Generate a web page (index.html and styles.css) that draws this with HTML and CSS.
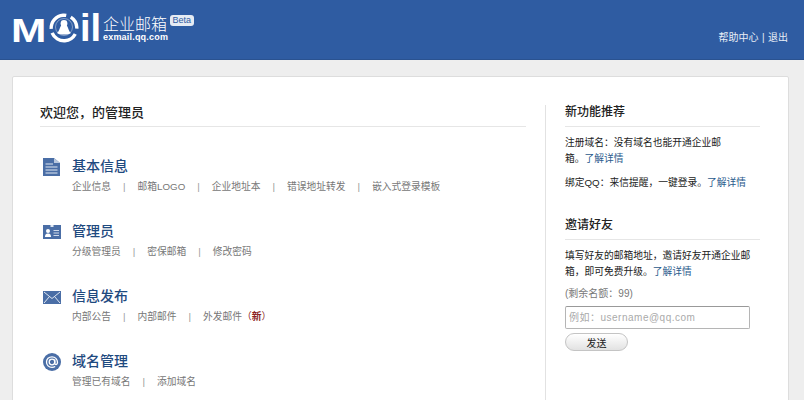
FILE: index.html
```html
<!DOCTYPE html>
<html lang="zh">
<head>
<meta charset="utf-8">
<title>企业邮箱</title>
<link rel="stylesheet" href="styles.css">
</head>
<body>
<header class="top">
  <div class="brand">
    <div class="logo">
      <span class="logo-m">M</span>
      <svg class="logo-o" width="30" height="30" viewBox="0 0 30 30">
        <circle cx="15" cy="15" r="12.800" fill="none" stroke="#fff" stroke-width="3.400" pathLength="100" stroke-dasharray="29 6 17 7 36 5" transform="rotate(176 15 15)"/>
        <circle cx="15" cy="14" r="8.500" fill="none" stroke="#fff" stroke-width="0.800" opacity="0.500"/>
        <circle cx="15" cy="10.500" r="3.400" fill="#fff"/>
        <path d="M15 11C10.500 11 11.500 17.500 8 20C11 22 19 22 22 20C18.500 17.500 19.500 11 15 11Z" fill="#fff"/>
      </svg>
      <span class="logo-il">il</span>
    </div>
    <div class="product">
      <div class="product-name">企业邮箱<span class="beta">Beta</span></div>
      <div class="product-domain">exmail.qq.com</div>
    </div>
  </div>
  <nav class="top-links"><a>帮助中心</a><span class="top-sep">|</span><a>退出</a></nav>
</header>
<main class="card">
  <section class="main-col">
    <h1 class="welcome">欢迎您，的管理员</h1>
    <div class="group">
      <svg class="ico" width="18" height="20" viewBox="0 0 18 20"><path d="M0 1H11L17 6V19H0Z" fill="#4a6ea6"/><path d="M11 1V6H17Z" fill="#b9c8de"/><path d="M2.500 7H10M2.500 10H14.500M2.500 13H14.500M2.500 16H14.500" stroke="#dfe7f2" stroke-width="1.200"/></svg>
      <div class="group-body">
        <h2 class="group-title">基本信息</h2>
        <p class="links"><a>企业信息</a><i>|</i><a>邮箱LOGO</a><i>|</i><a>企业地址本</a><i>|</i><a>错误地址转发</a><i>|</i><a>嵌入式登录模板</a></p>
      </div>
    </div>
    <div class="group">
      <svg class="ico" width="18" height="20" viewBox="0 0 18 20"><rect y="3" width="18" height="14" fill="#4a6ea6"/><rect x="7.500" y="3" width="3" height="2" fill="#dfe7f2"/><circle cx="5" cy="9" r="2" fill="#fff"/><path d="M2 15C2 12 3.500 11.500 5 11.500S8 12 8 15Z" fill="#fff"/><path d="M10.500 8.500H16M10.500 11H16M10.500 13.500H16" stroke="#cfdaea" stroke-width="1"/></svg>
      <div class="group-body">
        <h2 class="group-title">管理员</h2>
        <p class="links"><a>分级管理员</a><i>|</i><a>密保邮箱</a><i>|</i><a>修改密码</a></p>
      </div>
    </div>
    <div class="group">
      <svg class="ico" width="18" height="20" viewBox="0 0 18 20"><rect y="4" width="18" height="13" fill="#4a6ea6"/><path d="M1 5L9 11.500L17 5M1 16L6.500 9.500M17 16L11.500 9.500" fill="none" stroke="#dfe7f2" stroke-width="1"/></svg>
      <div class="group-body">
        <h2 class="group-title">信息发布</h2>
        <p class="links"><a>内部公告</a><i>|</i><a>内部邮件</a><i>|</i><a>外发邮件</a><span class="new">（<b>新</b>）</span></p>
      </div>
    </div>
    <div class="group">
      <svg class="ico" width="18" height="20" viewBox="0 0 18 20"><circle cx="9" cy="10" r="9" fill="#4a6ea6"/><circle cx="9" cy="10" r="2.800" fill="none" stroke="#fff" stroke-width="1.300"/><path d="M11.800 7.500V11.500C11.800 13 14.500 13 14.500 10.500C14.500 7 12 4.800 9 4.800C5.800 4.800 3.500 7 3.500 10C3.500 13.200 5.800 15.300 9 15.300C10.300 15.300 11.300 15 12.200 14.500" fill="none" stroke="#fff" stroke-width="1.300"/></svg>
      <div class="group-body">
        <h2 class="group-title">域名管理</h2>
        <p class="links"><a>管理已有域名</a><i>|</i><a>添加域名</a></p>
      </div>
    </div>
  </section>
  <aside class="side">
    <h3 class="side-title">新功能推荐</h3>
    <p class="side-text">注册域名：没有域名也能开通企业邮<br>箱。<a class="more">了解详情</a></p>
    <p class="side-text gap">绑定QQ：来信提醒，一键登录。<a class="more">了解详情</a></p>
    <h3 class="side-title second">邀请好友</h3>
    <p class="side-text">填写好友的邮箱地址，邀请好友开通企业邮<br>箱，即可免费升级。<a class="more">了解详情</a></p>
    <p class="quota">(剩余名额：99)</p>
    <input class="invite" type="text" placeholder="例如：username@qq.com">
    <button class="send" type="button">发送</button>
  </aside>
</main>
</body>
</html>
```
FILE: styles.css
```css
* { box-sizing: border-box; }
html, body { height: 400px; overflow: hidden; }
body {
  margin: 0;
  background: #eeeeee;
  font-family: "Liberation Sans", "Noto Sans CJK SC", sans-serif;
  font-size: 11px;
  color: #222;
}
h1, h2, h3, p { margin: 0; font-weight: normal; }
.top {
  height: 60px;
  background: #2f5ca2;
  border-bottom: 1px solid #2a5290;
  display: flex;
  justify-content: space-between;
  padding: 0 16px 0 13px;
}
.brand { display: flex; align-items: flex-start; padding-top: 13px; }
.logo { display: flex; align-items: center; height: 30px; color: #fff; font-weight: bold; }
.logo-m, .logo-il { font-family: "Liberation Sans", sans-serif; line-height: 30px; }
.logo-m {
  display: inline-block;
  width: 38px;
  font-size: 34px;
  margin: 3px 0 0 -2px;
  transform: scaleX(1.25);
  transform-origin: left center;
}
.logo-o { flex: none; }
.logo-il { font-size: 38px; margin-left: 1px; width: 22px; }
.product { margin-left: 1px; color: #fff; margin-top: 3px; }
.product-name { font-size: 16px; line-height: 17px; display: flex; align-items: flex-start; font-weight: 300; }
.beta {
  font-size: 9px;
  line-height: 11px;
  background: #e6ebf3;
  color: #2f5ca2;
  border-radius: 3px;
  padding: 0 2.500px;
  margin: -1px 0 0 3px;
}
.product-domain { font-size: 9px; line-height: 10px; font-weight: bold; letter-spacing: 0.200px; margin-top: -1px; }
.top-links { color: #e8eef6; font-size: 10px; padding-top: 32px; line-height: 12px; display: flex; }
.top-sep { margin: 0 3.500px; }
.card {
  margin: 16px 15px 0 12px;
  height: 340px;
  background: #fff;
  border: 1px solid #dddddd;
  border-radius: 2px;
  display: flex;
  padding: 28px 0 0 27px;
}
.main-col { width: 486px; }
.welcome {
  font-size: 13px;
  line-height: 15px;
  color: #222;
  height: 22px;
  border-bottom: 1px solid #e6e6e6;
  font-weight: 500;
}
.group { display: flex; height: 65px; padding-left: 3px; }
.welcome + .group { margin-top: 30px; }
.ico { flex: none; }
.group-body { margin-left: 11px; }
.group-title { font-size: 14px; line-height: 18px; color: #1f4a7f; font-weight: 500; }
.links { font-size: 9.750px; line-height: 24px; color: #777; display: flex; }
.links i { font-style: normal; margin: 0 12px; color: #999; }
.new { color: #8c1f1f; margin-left: 0; }
.side {
  margin-left: 19px;
  padding-left: 19px;
  border-left: 1px solid #e2e2e2;
  width: 215px;
  height: 311px;
}
.side-title { font-size: 12px; line-height: 15px; height: 22px; border-bottom: 1px solid #e6e6e6; color: #222; font-weight: 500; }
.side-title.second { margin-top: 27px; }
.side-text { font-size: 9.750px; line-height: 16px; color: #222; margin-top: 8px; white-space: nowrap; }
.more { color: #2a5a8c; }
.quota { font-size: 10px; line-height: 14px; color: #777; margin-top: 7px; }
.invite {
  display: block;
  width: 185px;
  height: 23px;
  margin-top: 5px;
  border: 1px solid #b5b5b5;
  border-top-color: #999;
  border-radius: 2px;
  padding: 0 3px;
  font: 10px "Liberation Sans", "Noto Sans CJK SC", sans-serif;
  background: #fff;
}
.invite::placeholder { color: #aaa; letter-spacing: 0.500px; }
.send {
  display: block;
  width: 63px;
  height: 18px;
  margin-top: 4px;
  border: 1px solid #c4c4c4;
  border-radius: 9px;
  background: linear-gradient(#ffffff, #e2e2e2);
  font: 10px "Liberation Sans", "Noto Sans CJK SC", sans-serif;
  color: #222;
  padding: 0;
}
```
